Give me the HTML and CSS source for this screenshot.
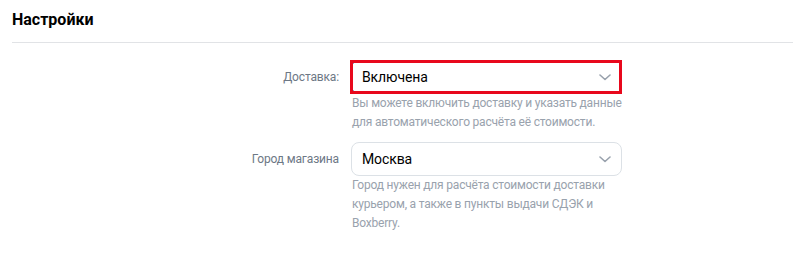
FILE: index.html
```html
<!DOCTYPE html>
<html lang="ru">
<head>
<meta charset="utf-8">
<title>Настройки</title>
<link rel="stylesheet" href="styles.css">
</head>
<body>
<div class="page">
  <h1 class="title">Настройки</h1>
  <div class="form">
    <div class="row">
      <div class="label">Доставка:</div>
      <div class="field">
        <div class="select select--error">
          <span class="value">Включена</span>
          <svg class="chevron" width="12" height="7" viewBox="0 0 12 7"><path d="M1 1l5 4.5L11 1" fill="none" stroke="#99a2ad" stroke-width="1.6" stroke-linecap="round" stroke-linejoin="round"/></svg>
        </div>
        <div class="hint">Вы можете включить доставку и указать данные для автоматического расчёта её стоимости.</div>
      </div>
    </div>
    <div class="row">
      <div class="label">Город магазина</div>
      <div class="field">
        <div class="select">
          <span class="value">Москва</span>
          <svg class="chevron" width="12" height="7" viewBox="0 0 12 7"><path d="M1 1l5 4.5L11 1" fill="none" stroke="#99a2ad" stroke-width="1.6" stroke-linecap="round" stroke-linejoin="round"/></svg>
        </div>
        <div class="hint">Город нужен для расчёта стоимости доставки курьером, а также в пункты выдачи СДЭК и Boxberry.</div>
      </div>
    </div>
  </div>
</div>
</body>
</html>
```

FILE: styles.css
```css
* { box-sizing: border-box; }
html, body { margin: 0; padding: 0; background: #fff; }
body { font-family: Roboto, "Noto Sans", Arial, sans-serif; color: #000; }
.page { padding: 0 12px; }
.title {
  margin: 0;
  padding: 11px 0 13px;
  font-size: 16px;
  line-height: 18px;
  font-weight: 700;
  color: #000;
  border-bottom: 1px solid #e1e3e6;
}
.form { padding-top: 17px; display: flex; flex-direction: column; gap: 10px; }
.row { display: flex; align-items: flex-start; gap: 12px; }
.label {
  width: 327px;
  text-align: right;
  font-size: 12px;
  letter-spacing: -0.15px;
  line-height: 16px;
  color: #6d7885;
  padding-top: 9px;
}
.field { width: 271px; }
.select {
  position: relative;
  height: 34px;
  border: 1px solid #dce1e6;
  border-radius: 8px;
  background: #fff;
  display: flex;
  align-items: center;
  justify-content: space-between;
  padding: 0 10px 0 10px;
}
.select--error { border-color: #5181b8; }
.select--error::after {
  content: "";
  position: absolute;
  top: -1px;
  left: -2px;
  right: -1px;
  bottom: -1px;
  border: 3px solid #e8081c;
  pointer-events: none;
}
.value { font-size: 14px; color: #000; letter-spacing: -0.1px; }
.chevron { display: block; }
.hint {
  margin-top: 0;
  font-size: 12px;
  letter-spacing: -0.2px;
  line-height: 19px;
  color: #99a2ad;
  padding-left: 1px;
}
```
